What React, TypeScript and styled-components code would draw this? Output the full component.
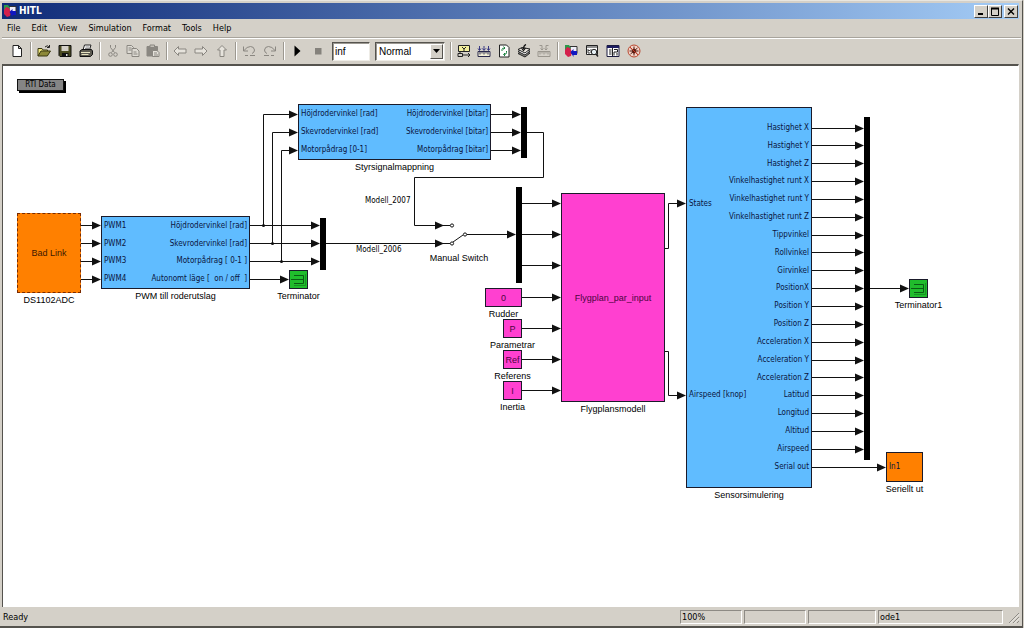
import React from 'react';
import styled, { createGlobalStyle, css } from 'styled-components';

const ui = `'DejaVu Sans Condensed', 'DejaVu Sans', sans-serif`;
const helv = `'Liberation Sans', Arial, sans-serif`;
const face = '#d4d0c8';
const ink = '#111';

const Global = createGlobalStyle`
  * { box-sizing: border-box; }
  body { margin: 0; background: ${face}; }
  button, input, select { margin: 0; padding: 0; font: inherit; color: inherit; }
`;

/* ---------- window chrome ---------- */

const Window = styled.div`
  display: flex;
  flex-direction: column;
  min-height: 100vh;
  margin-right: 1px;
  padding: 2px 1px 0 2px;
  background: ${face};
  border-top: 1px solid #e8e6e0;
  border-right: 1px solid #55534e;
  border-bottom: 2px solid #55534e;
  font: 9px/12px ${ui};
  color: #000;
`;

const TitleBar = styled.header`
  display: flex;
  align-items: center;
  height: 16px;
  margin-right: 2px;
  padding: 0 1px;
  background: linear-gradient(90deg, #0f2b78, #a4ccf6);
`;

const Title = styled.h1`
  flex: 1;
  margin: 0 0 0 2px;
  color: #fff;
  font: bold 10px/14px ${ui};
`;

const WindowButton = styled.button<{ $apart?: boolean }>`
  display: grid;
  place-items: center;
  width: 14px;
  height: 13px;
  margin-left: ${(p) => (p.$apart ? 2 : 0)}px;
  background: ${face};
  border: 1px solid;
  border-color: #fff #404040 #404040 #fff;
`;

const MenuBar = styled.nav`
  display: flex;
  align-items: center;
  gap: 11px;
  height: 18px;
  padding: 0 5px;
`;

const MenuItem = styled.button`
  background: none;
  border: 0;
`;

const ToolBar = styled.div`
  display: flex;
  align-items: center;
  gap: 1px;
  height: 27px;
  padding-left: 5px;
  border-top: 1px solid #a8a49c;
  box-shadow: inset 0 1px #fff;
`;

const Group = styled.div<{ $tight?: boolean }>`
  display: flex;
  gap: ${(p) => (p.$tight ? 0 : 1)}px;
`;

const IconButton = styled.button`
  display: grid;
  place-items: center;
  width: 20px;
  height: 20px;
  background: none;
  border: 0;
`;

const Separator = styled.span`
  width: 5px;
  height: 18px;
  display: flex;
  justify-content: center;
  &::before {
    content: '';
    box-sizing: border-box;
    width: 2px;
    background: #9c9890;
    border-right: 1px solid #fff;
  }
`;

const sunken = css`
  background: #fff;
  border: 1px solid;
  border-color: #55534e #eeece6 #eeece6 #55534e;
  box-shadow: inset 1px 1px #9c9992;
`;

const StopTime = styled.input`
  ${sunken}
  width: 38px;
  height: 19px;
  margin: 0 4px 0 3px !important;
  padding: 0 2px !important;
  font: 10px/14px ${helv} !important;
`;

const ModeBox = styled.label`
  ${sunken}
  display: flex;
  position: relative;
  width: 70px;
  height: 19px;
  margin-right: 2px;
`;

const ModeSelect = styled.select`
  appearance: none;
  flex: 1;
  padding: 1px 3px 0 !important;
  background: none;
  border: 0;
  font: 10px/14px ${helv} !important;
`;

const DropArrow = styled.span`
  position: absolute;
  top: 1px;
  right: 1px;
  bottom: 1px;
  width: 13px;
  display: grid;
  place-items: center;
  pointer-events: none;
  background: ${face};
  border: 1px solid;
  border-color: #fff #55534e #55534e #fff;
`;

const StatusBar = styled.footer`
  display: flex;
  align-items: center;
  gap: 2px;
  height: 19px;
  padding: 1px 0 0 1px;
`;

const Ready = styled.span`
  flex: 1;
`;

const Field = styled.output<{ $w: number }>`
  width: ${(p) => p.$w}px;
  height: 14px;
  padding-left: 1px;
  border: 1px solid;
  border-color: #8d8a84 #fff #fff #8d8a84;
`;

/* ---------- diagram ---------- */

const Canvas = styled.main`
  flex: 1;
  position: relative;
  min-height: 500px;
  margin-right: 2px;
  overflow: hidden;
  background: #fff;
  border: 1px solid #55534e;
  border-top-width: 2px;
  border-bottom: 0;
  border-right-color: #fff;
`;

const Wires = styled.svg`
  position: absolute;
  inset: 0;
  width: 100%;
  height: 100%;
`;

const Node = styled.figure<{ $x: number; $y: number; $w: number }>`
  position: absolute;
  left: ${(p) => p.$x}px;
  top: ${(p) => p.$y}px;
  width: ${(p) => p.$w}px;
  margin: 0;
  display: flex;
  flex-direction: column;
  align-items: center;
`;

const Body = styled.div<{ $h: number; $fill: string; $ink?: string; $dashed?: boolean }>`
  display: flex;
  justify-content: center;
  align-items: center;
  width: 100%;
  height: ${(p) => p.$h}px;
  background: ${(p) => p.$fill};
  border: 1px ${(p) => (p.$dashed ? 'dashed #7a2a00' : 'solid #1a1a2a')};
  font: 9px/10px ${helv};
  color: ${(p) => p.$ink ?? ink};
`;

const PortBody = styled(Body)<{ $pad: number }>`
  justify-content: space-between;
  align-items: stretch;
  padding: ${(p) => p.$pad}px 2px;
  font: 8px/10px ${ui};
  color: #0a1440;
`;

const Ports = styled.ul<{ $right?: boolean; $inset?: boolean }>`
  display: flex;
  flex-direction: column;
  justify-content: space-between;
  width: ${(p) => (p.$right ? 'auto' : '0')};
  margin: 0;
  padding: ${(p) => (p.$inset ? '76px 0 72px' : '0')};
  list-style: none;
  white-space: pre;
  text-align: ${(p) => (p.$right ? 'right' : 'left')};
`;

const Caption = styled.figcaption`
  margin-top: 1px;
  font: 9px/12px ${helv};
  white-space: nowrap;
`;

const SignalLabel = styled.span<{ $x: number; $y: number }>`
  position: absolute;
  left: ${(p) => p.$x}px;
  top: ${(p) => p.$y}px;
  font: 8px/10px ${ui};
`;

const Mux = styled.div<{ $x: number; $y: number; $h: number }>`
  position: absolute;
  left: ${(p) => p.$x}px;
  top: ${(p) => p.$y}px;
  width: 6px;
  height: ${(p) => p.$h}px;
  background: #000;
`;

const DataButton = styled.button`
  position: absolute;
  left: 14px;
  top: 13px;
  width: 47px;
  height: 12px;
  background: #858585;
  border: 1px solid #111;
  box-shadow: 2px 2px #000;
  font: 8px/10px ${ui} !important;
`;

const BLUE = '#60bcff';
const PINK = '#ff40d0';
const ORANGE = '#ff8000';
const PINK_INK = '#4c0440';
const ORANGE_INK = '#401800';

const sensorOutputs = [
  'Hastighet X', 'Hastighet Y', 'Hastighet Z',
  'Vinkelhastighet runt X', 'Vinkelhastighet runt Y', 'Vinkelhastighet runt Z',
  'Tippvinkel', 'Rollvinkel', 'Girvinkel', 'PositionX', 'Position Y', 'Position Z',
  'Acceleration X', 'Acceleration Y', 'Acceleration Z',
  'Latitud', 'Longitud', 'Altitud', 'Airspeed', 'Serial out',
];

const constants = [
  { x: 482, y: 222, w: 37, value: '0', name: 'Rudder' },
  { x: 500, y: 253, w: 19, value: 'P', name: 'Parametrar' },
  { x: 500, y: 284, w: 19, value: 'Ref', name: 'Referens' },
  { x: 500, y: 315, w: 19, value: 'I', name: 'Inertia' },
];

/** A signal line given as a path, ending in an arrow head at (x, y). */
function Wire({ d, x, y }: { d: string; x: number; y: number }) {
  return (
    <>
      <path d={`${d}H${x - 4}`} fill="none" stroke={ink} />
      <path d={`M${x} ${y}l-9 -4v8z`} fill={ink} />
    </>
  );
}

function Line({ from, to, y }: { from: number; to: number; y: number }) {
  return <Wire d={`M${from} ${y}`} x={to} y={y} />;
}

function TerminatorBlock({ x, y, name }: { x: number; y: number; name: string }) {
  return (
    <Node $x={x} $y={y} $w={19}>
      <Body $h={19} $fill="#20bc2c">
        <svg width="17" height="17" viewBox="0 0 17 17" fill="none" stroke="#0a5a14">
          <path d="M1 8.5H13.5M4 4.5H13.5V12.5H4" />
          <path d="M15.5 3V14.5H4" stroke="#159422" />
        </svg>
      </Body>
      <Caption>{name}</Caption>
    </Node>
  );
}

function Diagram() {
  return (
    <Canvas>
      <Wires aria-hidden="true">
        {[159, 177, 195, 213].map((y) => <Line key={y} from={78} to={98} y={y + 0.5} />)}
        {[159, 177, 195].map((y) => <Line key={y} from={247} to={317} y={y + 0.5} />)}
        <Line from={247} to={286} y={213.5} />
        {[[260, 159, 48], [269, 177, 66], [278, 195, 84]].map(([x, y, t]) => (
          <g key={x}>
            <Wire d={`M${x + 0.5} ${y}V${t + 0.5}`} x={295} y={t + 0.5} />
            <circle cx={x + 0.5} cy={y + 0.5} r="1.5" fill={ink} />
          </g>
        ))}
        {[48, 66, 84].map((y) => <Line key={y} from={488} to={518} y={y + 0.5} />)}
        <Wire d="M523 66.5H540.5V111.5H411.5V159.5" x={441} y={159.5} />
        <Line from={323} to={441} y={177.5} />
        <g fill="none" stroke={ink}>
          <path d="M440 159.5H447M440 177.5H447M450 176L460 169M464 168.5H480" />
          <circle cx="449" cy="159.5" r="1.6" />
          <circle cx="449" cy="177.5" r="1.6" />
          <circle cx="462" cy="168.5" r="1.6" />
        </g>
        <Line from={464} to={513} y={168.5} />
        {[137, 168, 199, 231, 262, 293, 324].map((y) => <Line key={y} from={519} to={558} y={y + 0.5} />)}
        <Wire d="M661 182.5H665.5V137.5" x={683} y={137.5} />
        <Wire d="M661 285.5H665.5V329.5" x={683} y={329.5} />
        {sensorOutputs.map((name, i) => (
          <Line key={name} from={808} to={name === 'Serial out' ? 883 : 861} y={Math.round(61.5 + i * 17.85) + 0.5} />
        ))}
        <Line from={866} to={906} y={222.5} />
      </Wires>

      <DataButton>RTI Data</DataButton>

      <Node $x={14} $y={147} $w={64}>
        <Body $h={80} $fill={ORANGE} $ink={ORANGE_INK} $dashed>Bad Link</Body>
        <Caption>DS1102ADC</Caption>
      </Node>

      <Node $x={98} $y={150} $w={149}>
        <PortBody $h={73} $fill={BLUE} $pad={4}>
          <Ports>
            {['PWM1', 'PWM2', 'PWM3', 'PWM4'].map((p) => <li key={p}>{p}</li>)}
          </Ports>
          <Ports $right>
            {['Höjdrodervinkel [rad]', 'Skevrodervinkel [rad]', 'Motorpådrag [ 0-1 ]', 'Autonomt läge [  on / off  ]'].map((p) => (
              <li key={p}>{p}</li>
            ))}
          </Ports>
        </PortBody>
        <Caption>PWM till roderutslag</Caption>
      </Node>

      <Node $x={295} $y={38} $w={193}>
        <PortBody $h={56} $fill={BLUE} $pad={4}>
          <Ports>
            {['Höjdrodervinkel [rad]', 'Skevrodervinkel [rad]', 'Motorpådrag [0-1]'].map((p) => <li key={p}>{p}</li>)}
          </Ports>
          <Ports $right>
            {['Höjdrodervinkel [bitar]', 'Skevrodervinkel [bitar]', 'Motorpådrag [bitar]'].map((p) => <li key={p}>{p}</li>)}
          </Ports>
        </PortBody>
        <Caption>Styrsignalmappning</Caption>
      </Node>

      <Mux $x={317} $y={152} $h={52} />
      <Mux $x={518} $y={41} $h={51} />
      <Mux $x={513} $y={121} $h={96} />
      <Mux $x={861} $y={51} $h={343} />

      <TerminatorBlock x={286} y={204} name="Terminator" />
      <TerminatorBlock x={906} y={213} name="Terminator1" />

      <SignalLabel $x={362} $y={130}>Modell_2007</SignalLabel>
      <SignalLabel $x={353} $y={179}>Modell_2006</SignalLabel>
      <Node $x={441} $y={185} $w={30}>
        <Caption>Manual Switch</Caption>
      </Node>

      {constants.map((c) => (
        <Node key={c.name} $x={c.x} $y={c.y} $w={c.w}>
          <Body $h={19} $fill={PINK} $ink={PINK_INK}>{c.value}</Body>
          <Caption>{c.name}</Caption>
        </Node>
      ))}

      <Node $x={558} $y={127} $w={104}>
        <Body $h={209} $fill={PINK} $ink={PINK_INK}>Flygplan_par_input</Body>
        <Caption>Flygplansmodell</Caption>
      </Node>

      <Node $x={683} $y={41} $w={126}>
        <PortBody $h={381} $fill={BLUE} $pad={15}>
          <Ports $inset>
            <li>States</li>
            <li>Airspeed [knop]</li>
          </Ports>
          <Ports $right>
            {sensorOutputs.map((p) => <li key={p}>{p}</li>)}
          </Ports>
        </PortBody>
        <Caption>Sensorsimulering</Caption>
      </Node>

      <Node $x={883} $y={386} $w={37}>
        <PortBody $h={30} $fill={ORANGE} $pad={9}>
          <Ports><li>In1</li></Ports>
        </PortBody>
        <Caption>Seriellt ut</Caption>
      </Node>
    </Canvas>
  );
}

/* ---------- icons ---------- */

const grey = '#8a8781';

function ModelIcon({ size }: { size: number }) {
  return (
    <svg width={size} height={size} viewBox="0 0 14 14">
      <path d="M6 2.500h7v7H6z" fill="#f0eef8" stroke="#333" />
      <path d="M1 1h4l2 3-2 3H1z" fill="#2a9a4a" />
      <path d="M3 3l3 1 2 4-1 4-3 1-3-3V6z" fill="#d4204c" />
      <path d="M6.500 8l3-3v2H13v4H9.500v2z" fill="#1018c0" />
    </svg>
  );
}

const icons: Record<string, React.ReactNode> = {
  New: <path d="M3 1.500h5.500L11.500 4.500V12.500H3zM8.500 1.500v3h3" fill="#fff" stroke="#222" />,
  Open: (
    <>
      <path d="M1 12V4.500h4l1 1.500h4.500V7" fill="#f0e880" stroke="#3a3810" />
      <path d="M1 12l3-5h9.500l-3.200 5z" fill="#8c8838" stroke="#3a3810" />
      <path d="M8 3q2.500-2.500 4 0M12.500 1v2.500H10" fill="none" stroke="#222" />
    </>
  ),
  Save: (
    <>
      <path d="M1 1.500h12v11H2L1 11.500z" fill="#4a4a20" stroke="#111" />
      <path d="M3.500 2h7v5h-7z" fill="#d4d0c8" />
      <path d="M4 9h6.500v3.500H4z" fill="#111" />
      <path d="M8 10h1.500v2H8z" fill="#ddd" />
    </>
  ),
  Print: (
    <>
      <path d="M4 6l1.500-5h6.500L10.500 6z" fill="#fff" stroke="#222" />
      <path d="M6.500 3h4M6 4.500h4" stroke="#555" strokeWidth=".7" />
      <path d="M1 7l2-1.500h9.500L13.500 7v3.500l-2 2H1z" fill="#5c5a50" stroke="#111" />
      <path d="M2 8.500h9M2.500 10.500h7" stroke="#e6e2c0" />
    </>
  ),
  Cut: (
    <g fill="none" stroke={grey}>
      <path d="M4.500 1v2.500l4 5M9.500 1v2.500l-4 5" />
      <circle cx="4.500" cy="10.500" r="1.800" />
      <circle cx="9.500" cy="10.500" r="1.800" />
    </g>
  ),
  Copy: (
    <g fill="#dedbd4" stroke={grey}>
      <path d="M1 1.500h4.500L7.500 3.500V9.500H1zM2.500 4h3M2.500 6h3" />
      <path d="M6 4.500h4.500L13 7v5.500H6zM7.500 8h3M7.500 10h4" />
    </g>
  ),
  Paste: (
    <>
      <path d="M1 2.500h10.500v9.500H1z" fill={grey} stroke={grey} />
      <path d="M4 1h4.500v2.500H4z" fill="#c4c0b8" stroke={grey} />
      <path d="M6.500 6.500h4.500l2 2v4H6.500zM8 9h3M8 11h4" fill="#e4e1da" stroke={grey} />
    </>
  ),
  Back: <path d="M1 7l4.500-4.500V5H13v4H5.500v2.500z" fill="#e6e3dc" stroke={grey} />,
  Forward: <path d="M13 7L8.500 2.500V5H1v4h7.500v2.500z" fill="#e6e3dc" stroke={grey} />,
  Up: <path d="M7 1.500l4.500 4.500H9v6.500H5V6H2.500z" fill="#e6e3dc" stroke={grey} />,
  Undo: <path d="M1.500 2.500v4.500H6M2 6.500Q5 2.500 8.500 2.500T12.500 6Q12.500 8.500 10 9.500M3 11.500h3M8 11.500h5" fill="none" stroke={grey} />,
  Redo: <path d="M12.500 2.500v4.500H8M12 6.500Q9 2.500 5.500 2.500T1.500 6Q1.500 8.500 4 9.500M11 11.500H8M6 11.500H1" fill="none" stroke={grey} />,
  Start: <path d="M4.500 1.500L10.500 7l-6 5.500z" fill="#000" />,
  Stop: <path d="M4 4h6.500v6.500H4z" fill="#85827c" />,
  Library: (
    <>
      <path d="M1.500 1.500h11v6h-11z" fill="#f4f09c" stroke="#222" />
      <path d="M5 3l2 2 2-2M7 5v2.500" fill="none" stroke="#222" />
      <path d="M1 9.500h4.500v3H1zM6 11h7M11 9l2 2-2 2M3 7.500v2" fill="none" stroke="#222" />
    </>
  ),
  Build: (
    <>
      <path d="M1 7.500h12v5H1z" fill="#f4f0d8" stroke="#28284c" />
      <path d="M3 7.500v3M5 7.500v2M7 7.500v3M9 7.500v2M11 7.500v3" stroke="#28284c" />
      <path d="M2.500 2v4M7 2v4M11.500 2v4M1 4.500l1.500 2 1.500-2M5.500 4.500l1.500 2 1.500-2M10 4.500l1.500 2 1.500-2" fill="none" stroke="#28287c" strokeWidth=".9" />
    </>
  ),
  Refresh: (
    <>
      <path d="M2.500 1h7l2.500 2.500v9.500H2.500z" fill="#fff" stroke="#222" />
      <path d="M5 7V5.500Q5 4 7.500 4M6.500 2.500L8 4 6.500 5.500M9.500 7v1.500Q9.500 10.500 7 10.500M8 9L6.500 10.500 8 12" fill="none" stroke="#18803c" />
    </>
  ),
  Update: (
    <>
      <path d="M1 9.500L5 7.500l8 1.500-5 4z" fill="#8c8a84" stroke="#222" />
      <path d="M1 7.500L5 5.500l8 1.500-5 4z" fill="#fff" stroke="#222" />
      <path d="M1 5.500L5 3.500l8 1.500-5 4z" fill="#e8e4dc" stroke="#222" />
      <path d="M9 .5Q6.500 1.500 6.500 5M4.500 4l2 2.500 2-2.500" fill="none" stroke="#111" strokeWidth="1.200" />
    </>
  ),
  Compile: (
    <g fill="none" stroke="#9a968e">
      <path d="M1 7.500h12v5H1zM3 7.500v3M5 7.500v2M7 7.500v3M9 7.500v2M11 7.500v3" />
      <path d="M2.500 1.500H5V6M11.500 1.500H9V6M3.500 4.500L5 6l1.500-1.500M7.500 4.500L9 6l1.500-1.500" />
    </g>
  ),
  Explorer: (
    <>
      <path d="M1.500 1.500h11v9h-11z" fill="#fff" stroke="#222" />
      <path d="M2 3h10" stroke="#222" />
      <path d="M3 5v4h2M3 6.500h2M6 5v4" fill="none" stroke="#444" />
      <circle cx="9" cy="8" r="2.700" fill="#e6f0f4" stroke="#222" />
      <path d="M11 10l2 2.500" stroke="#222" strokeWidth="1.500" />
    </>
  ),
  Browser: (
    <>
      <path d="M1 1.500h12v11H1z" fill="#fff" stroke="#1c1c40" />
      <path d="M1 3h12" stroke="#1c1c60" strokeWidth="2" />
      <path d="M3 6h2.500M3 8h2.500M3 10h2.500M6.500 4v8" stroke="#222" />
      <path d="M8 5.500h3.500v2.500H8v3.500M11 9v2.500" fill="none" stroke="#222" />
    </>
  ),
  Debug: (
    <>
      <circle cx="7" cy="7" r="6" fill="#f4d4c8" stroke="#b84830" />
      <path d="M7 2.500v9M2.500 7h9M3.500 4l7 6M10.500 4l-7 6" stroke="#501810" />
      <ellipse cx="7" cy="7" rx="2" ry="2.600" fill="#5c1c10" />
      <path d="M3 3l8 8" stroke="#c83c28" />
    </>
  ),
};

function Tool({ name }: { name: string }) {
  return (
    <IconButton aria-label={name}>
      {name === 'Model' ? (
        <ModelIcon size={14} />
      ) : (
        <svg width="14" height="14" viewBox="0 0 14 14">{icons[name]}</svg>
      )}
    </IconButton>
  );
}

function Tools({ names, tight }: { names: string[]; tight?: boolean }) {
  return (
    <Group $tight={tight}>
      {names.map((n) => <Tool key={n} name={n} />)}
    </Group>
  );
}

export default function App() {
  return (
    <>
      <Global />
      <Window>
        <TitleBar>
          <ModelIcon size={14} />
          <Title>HITL</Title>
          <WindowButton aria-label="Minimize">
            <svg width="10" height="9"><path d="M2 7h5" stroke="#000" strokeWidth="2" /></svg>
          </WindowButton>
          <WindowButton aria-label="Maximize">
            <svg width="10" height="9"><path d="M1.500 1v7.500h7V1M1 1.500h8" fill="none" stroke="#000" /><path d="M1 1.500h8" stroke="#000" strokeWidth="2" /></svg>
          </WindowButton>
          <WindowButton aria-label="Close" $apart>
            <svg width="10" height="9"><path d="M2 1.500l6 6M8 1.500l-6 6" stroke="#000" strokeWidth="1.400" /></svg>
          </WindowButton>
        </TitleBar>
        <MenuBar>
          {['File', 'Edit', 'View', 'Simulation', 'Format', 'Tools', 'Help'].map((m) => <MenuItem key={m}>{m}</MenuItem>)}
        </MenuBar>
        <ToolBar role="toolbar">
          <Tools names={['New']} />
          <Separator />
          <Tools names={['Open', 'Save', 'Print']} />
          <Separator />
          <Tools names={['Cut', 'Copy', 'Paste']} tight />
          <Separator />
          <Tools names={['Back', 'Forward', 'Up']} />
          <Separator />
          <Tools names={['Undo', 'Redo']} />
          <Separator />
          <Tools names={['Start', 'Stop']} />
          <StopTime aria-label="Stop time" defaultValue="inf" />
          <ModeBox>
            <ModeSelect aria-label="Simulation mode" defaultValue="Normal">
              <option>Normal</option>
              <option>Accelerator</option>
              <option>External</option>
            </ModeSelect>
            <DropArrow>
              <svg width="7" height="4"><path d="M0 0h7L3.500 4z" /></svg>
            </DropArrow>
          </ModeBox>
          <Separator />
          <Tools names={['Library', 'Build', 'Refresh', 'Update', 'Compile']} tight />
          <Separator />
          <Tools names={['Model', 'Explorer', 'Browser', 'Debug']} />
        </ToolBar>
        <Diagram />
        <StatusBar>
          <Ready>Ready</Ready>
          <Field $w={62}>100%</Field>
          <Field $w={62} />
          <Field $w={68} />
          <Field $w={125}>ode1</Field>
          <svg width="16" height="14" stroke="#8d8a84" fill="none">
            <path d="M4 13L14 3M8 13L14 7M12 13L14 11" />
            <path d="M5 13.500L14.500 4M9 13.500L14.500 8" stroke="#fff" strokeWidth=".6" />
          </svg>
        </StatusBar>
      </Window>
    </>
  );
}
